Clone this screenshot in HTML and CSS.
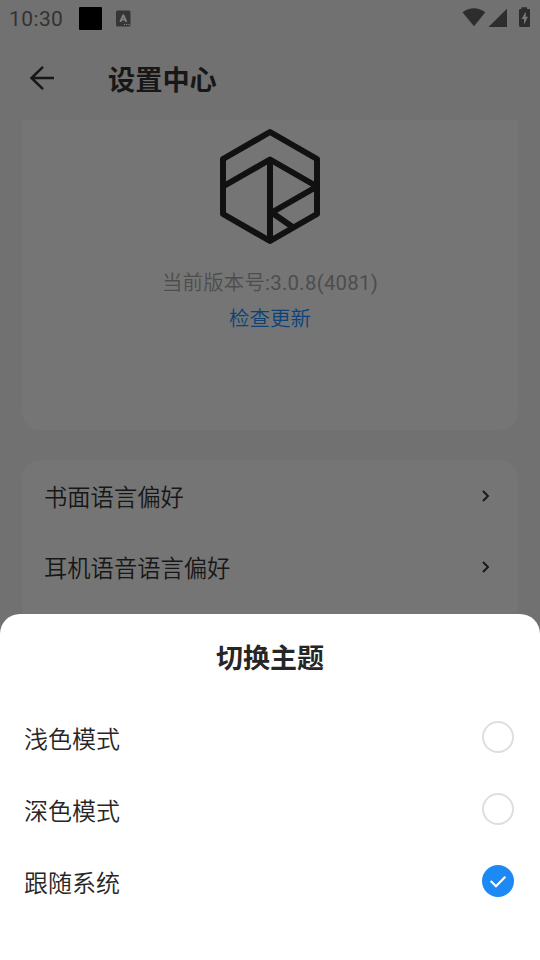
FILE: index.html
```html
<!DOCTYPE html>
<html lang="zh-CN">
<head>
<meta charset="utf-8">
<title>设置中心</title>
<link rel="stylesheet" href="styles.css">
</head>
<body>
<div class="screen">
  <div class="status">
    <span class="time">10:30</span>
    <span class="block"></span>
    <svg class="keyboard" width="16" height="17" viewBox="0 0 16 17"><rect x="0" y="0.5" width="14.5" height="16" rx="1.5" fill="#363636"/><path d="M4.300 11.800 7.3 4.800 10.300 11.800M5.5 9.6H9.1" fill="none" stroke="#808080" stroke-width="1.9" stroke-linejoin="bevel"/><path d="M7.800 14.5h1.3m1 0h1.3m1 0h1.3" stroke="#808080" stroke-width="1.2"/></svg>
    <span class="spacer"></span>
    <svg class="system" width="70" height="22" viewBox="0 0 70 22"><path d="M2.5 5.3Q13.9-2.8 25.3 5.3L14 19.2Z" fill="#2d2d2d"/><path d="M28.5 19.9 47 1.8V19.9Z" fill="#2d2d2d"/><path d="M61.5.3h5.5v1.8h1.8q1.4 0 1.4 1.4v15q0 1.4-1.4 1.4H60.4q-1.4 0-1.4-1.4v-15q0-1.4 1.4-1.4h1.1Z" fill="#2d2d2d"/><path d="M65.8 4.500 61.5 12h2.5v5.500l4-7.700h-2.2Z" fill="#777"/></svg>
  </div>
  <header class="appbar">
    <svg class="back" width="26" height="26" viewBox="0 0 26 26"><path d="M25 13H2.5M14 1.8 2.5 13 14 24.2" fill="none" stroke="#171717" stroke-width="2.5"/></svg>
    <h1>设置中心</h1>
  </header>
  <main>
    <section class="card about">
      <svg class="logo" width="100" height="116" viewBox="0 0 100 116"><g fill="none" stroke="#111" stroke-width="6" stroke-linejoin="round"><path d="M50 4 97 31V86L50 113 3 86V31Z"/><path d="M3 58.500 50 31.500 97 58.500 50 85.500M50 31.500V113M51 84 74 100"/></g></svg>
      <p class="version">当前版本号<span>:3.0.8(4081)</span></p>
      <a class="update">检查更新</a>
    </section>
    <section class="card list">
      <div class="row"><span>书面语言偏好</span><svg width="8" height="12" viewBox="0 0 8 12"><path d="M1 1 6 6 1 11" fill="none" stroke="#171717" stroke-width="1.9"/></svg></div>
      <div class="row"><span>耳机语音语言偏好</span><svg width="8" height="12" viewBox="0 0 8 12"><path d="M1 1 6 6 1 11" fill="none" stroke="#171717" stroke-width="1.9"/></svg></div>
    </section>
  </main>
  <section class="sheet">
    <h2>切换主题</h2>
    <div class="option"><span>浅色模式</span><i class="radio"></i></div>
    <div class="option"><span>深色模式</span><i class="radio"></i></div>
    <div class="option"><span>跟随系统</span><i class="radio checked"><svg width="32" height="32" viewBox="0 0 32 32"><path d="M8.700 16 14 21.200 23.300 11.700" fill="none" stroke="#fff" stroke-width="2.2"/></svg></i></div>
  </section>
</div>
</body>
</html>
```
FILE: styles.css
```css
* { box-sizing: border-box; }
body { margin: 0; font-family: Roboto, "Noto Sans CJK SC", sans-serif; }
h1, h2, p { margin: 0; }
svg { display: block; flex: none; }
.screen { position: relative; width: 540px; height: 960px; overflow: hidden; background: #717171; color: #171717; }
.status { display: flex; height: 36px; padding: 0 10px 0 9px; align-items: center; }
.time { width: 70px; font-size: 21px; line-height: 36px; letter-spacing: .4px; color: #333; padding-top: 2px; }
.block { width: 23px; height: 23px; border-radius: 1px; background: #000; }
.keyboard { margin-left: 14px; }
.spacer { flex: 1; }
.appbar { display: flex; height: 84px; padding-left: 29px; align-items: center; }
.back { width: 26px; }
h1 { margin-left: 53px; padding-top: 5px; font-size: 27.200px; font-weight: 700; line-height: 40px; }
main { display: flex; flex-direction: column; gap: 30px; padding: 0 22px; }
.card { background: #757575; border-radius: 18px; }
.about { display: flex; flex-direction: column; align-items: center; height: 310px; padding-top: 8px; border-radius: 0 0 18px 18px; }
.version { margin-top: 23px; font-size: 20.400px; font-weight: 350; line-height: 32px; letter-spacing: .25px; color: #4d4d4d; }
.version span { font-weight: 400; }
.update { margin-top: 4px; font-size: 20.500px; font-weight: 350; line-height: 32px; color: #0c4279; }
.list { height: 240px; }
.row { display: flex; align-items: center; justify-content: space-between; height: 71px; padding: 0 28px 0 22px; font-size: 23.300px; font-weight: 350; }
.row svg { margin-top: 0; }
.sheet { position: absolute; left: 0; right: 0; bottom: 0; height: 346px; border-radius: 20px 20px 0 0; background: #fff; color: #262626; }
h2 { height: 87px; padding-top: 2px; font-size: 27px; font-weight: 700; line-height: 87px; text-align: center; }
.option { display: flex; height: 72px; padding: 0 26px 0 24px; align-items: center; justify-content: space-between; font-size: 24px; font-weight: 350; }
.radio { width: 32px; height: 32px; border: 2px solid #dedede; border-radius: 50%; }
.checked { border: 0; background: #1d89f5; }
```
